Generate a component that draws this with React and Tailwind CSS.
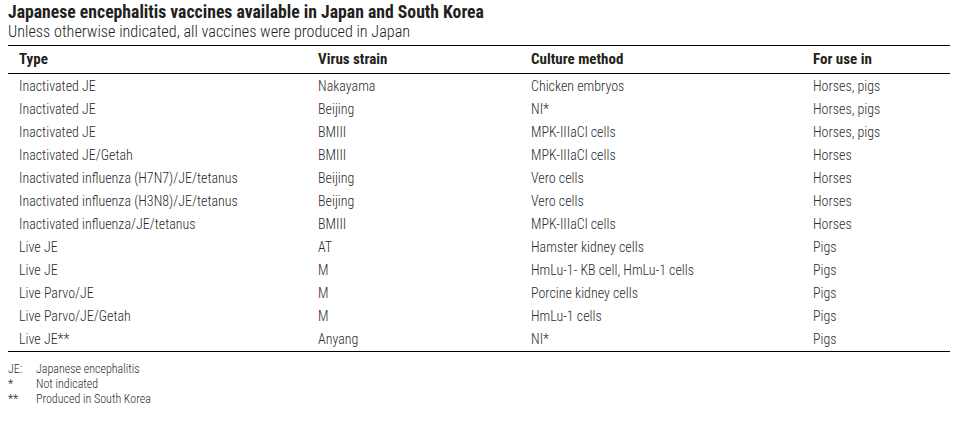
import React from 'react';

const rows = [
    ['Inactivated JE', 'Nakayama', 'Chicken embryos', 'Horses, pigs'],
    ['Inactivated JE', 'Beijing', 'NI*', 'Horses, pigs'],
    ['Inactivated JE', 'BMIII', 'MPK-IIIaCl cells', 'Horses, pigs'],
    ['Inactivated JE/Getah', 'BMIII', 'MPK-IIIaCl cells', 'Horses'],
    ['Inactivated influenza (H7N7)/JE/tetanus', 'Beijing', 'Vero cells', 'Horses'],
    ['Inactivated influenza (H3N8)/JE/tetanus', 'Beijing', 'Vero cells', 'Horses'],
    ['Inactivated influenza/JE/tetanus', 'BMIII', 'MPK-IIIaCl cells', 'Horses'],
    ['Live JE', 'AT', 'Hamster kidney cells', 'Pigs'],
    ['Live JE', 'M', 'HmLu-1- KB cell, HmLu-1 cells', 'Pigs'],
    ['Live Parvo/JE', 'M', 'Porcine kidney cells', 'Pigs'],
    ['Live Parvo/JE/Getah', 'M', 'HmLu-1 cells', 'Pigs'],
    ['Live JE**', 'Anyang', 'NI*', 'Pigs'],
];

const notes = [
    ['JE:', 'Japanese encephalitis'],
    ['*', 'Not indicated'],
    ['**', 'Produced in South Korea'],
];

const cols = 'grid grid-cols-[299px_213px_282px_1fr] pl-[11px]';

const App = () => {
    return (
        <div className="w-[980px] h-[441px] bg-white text-[#231f20] pl-2 pt-[2px] font-['Roboto_Condensed','Roboto',sans-serif]">
            <h1 className="text-[17.7px] leading-[20px] font-bold">
                Japanese encephalitis vaccines available in Japan and South Korea
            </h1>
            <p className="text-[16.2px] leading-[20px] font-light">Unless otherwise indicated, all vaccines were produced in Japan</p>

            <div className="w-[942px] mt-[3px] border-t border-black">
                <div className={`${cols} h-[28px] items-center border-b border-black text-[15px] font-bold`}>
                    <div>Type</div>
                    <div>Virus strain</div>
                    <div>Culture method</div>
                    <div>For use in</div>
                </div>
                <div className="pt-[1px] border-b border-black">
                    {rows.map((r, i) => (
                        <div key={i} className={`${cols} h-[23px] items-center text-[14px] font-light text-[#2b2b2b]`}>
                            <div>{r[0]}</div>
                            <div>{r[1]}</div>
                            <div>{r[2]}</div>
                            <div>{r[3]}</div>
                        </div>
                    ))}
                </div>
            </div>

            <div className="mt-[10px] text-[12px] leading-[15px] font-light text-[#2b2b2b]">
                {notes.map((n, i) => (
                    <div key={i} className="flex">
                        <div className="w-[28px]">{n[0]}</div>
                        <div>{n[1]}</div>
                    </div>
                ))}
            </div>
        </div>
    );
};

export default App;
